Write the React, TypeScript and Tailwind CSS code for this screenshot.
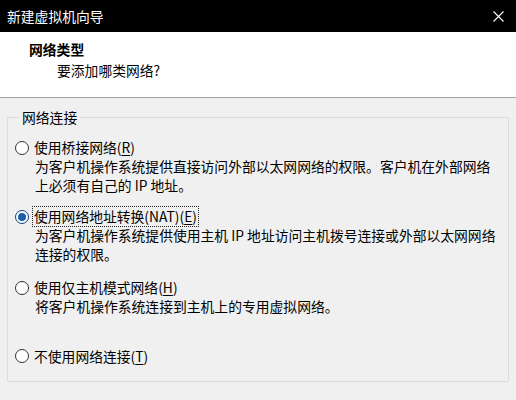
import React from 'react'

const font = { fontFamily: '"Noto Sans CJK SC", "Noto Sans", sans-serif' }

function Radio({ checked }: { checked?: boolean }) {
  return (
    <span
      className={
        'flex h-[14px] w-[14px] shrink-0 items-center justify-center rounded-full border bg-white ' +
        (checked ? 'border-[#0b3f7a]' : 'border-[#333333]')
      }
    >
      {checked && <span className="h-[8px] w-[8px] rounded-full bg-[#1d5fa8]" />}
    </span>
  )
}

interface OptionProps {
  label: string
  accel: string
  checked?: boolean
  lines: string[]
  className?: string
}

function Option({ label, accel, checked, lines, className }: OptionProps) {
  return (
    <div className={className}>
      <div className="flex h-[19px] items-center gap-[5px]">
        <Radio checked={checked} />
        <span
          className={
            'leading-[19px] ' + (checked ? 'outline outline-1 outline-dotted outline-[#222] px-[1px] -ml-[1px]' : '')
          }
        >
          {label}(<span className="underline underline-offset-2">{accel}</span>)
        </span>
      </div>
      {lines.map((l, i) => (
        <div key={i} className="ml-[20px] leading-[18.5px]">
          {l}
        </div>
      ))}
    </div>
  )
}

export default function App() {
  return (
    <div className="flex h-[400px] w-[516px] flex-col overflow-hidden text-[13.8px] text-black" style={font}>
      {/* title bar */}
      <div className="flex h-[32px] shrink-0 items-center justify-between bg-black pl-[7px] pr-[12px]">
        <span className="text-white">新建虚拟机向导</span>
        <svg width="11" height="11" viewBox="0 0 11 11" className="text-white">
          <path d="M0.5 0.5 L10.5 10.5 M10.5 0.5 L0.5 10.5" stroke="currentColor" strokeWidth="1.1" />
        </svg>
      </div>

      {/* header */}
      <div className="h-[65px] shrink-0 bg-white pl-[29px] pt-[7px]">
        <div className="font-bold leading-[20px]">网络类型</div>
        <div className="mt-[1px] pl-[28px] leading-[20px]">要添加哪类网络?</div>
      </div>
      <div className="h-px shrink-0 bg-[#a0a0a0]" />

      {/* body */}
      <div className="flex-1 bg-[#f0f0f0] px-[7px] pt-[10px]">
        <fieldset className="h-[274px] border border-[#dcdcdc] pl-[7px] pt-[12px]">
          <legend className="ml-[4px] px-[3px] leading-[18px]">网络连接</legend>
          <Option
            label="使用桥接网络"
            accel="R"
            lines={['为客户机操作系统提供直接访问外部以太网网络的权限。客户机在外部网络', '上必须有自己的 IP 地址。']}
          />
          <Option
            className="mt-[13px]"
            label="使用网络地址转换(NAT)"
            accel="E"
            checked
            lines={['为客户机操作系统提供使用主机 IP 地址访问主机拨号连接或外部以太网网络', '连接的权限。']}
          />
          <Option
            className="mt-[15px]"
            label="使用仅主机模式网络"
            accel="H"
            lines={['将客户机操作系统连接到主机上的专用虚拟网络。']}
          />
          <Option className="mt-[31px]" label="不使用网络连接" accel="T" lines={[]} />
        </fieldset>
      </div>
    </div>
  )
}
